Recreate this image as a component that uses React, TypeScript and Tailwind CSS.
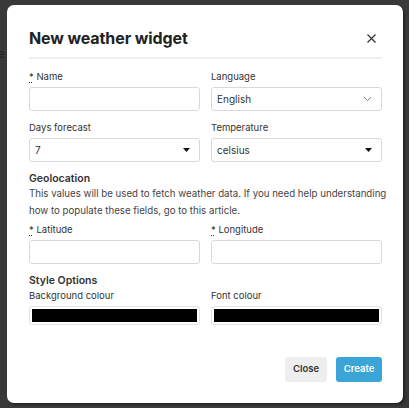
import React from "react";

const font = { fontFamily: "Inter, 'Noto Sans', sans-serif" };

function Req() {
  return (
    <abbr title="required" className="no-underline">
      <span className="underline decoration-dotted underline-offset-2">*</span>
    </abbr>
  );
}

function Label({ children }: { children: React.ReactNode }) {
  return (
    <div className="h-[14px] text-[9.5px] leading-[14px] text-[#333]">{children}</div>
  );
}

function TextInput() {
  return (
    <div className="mt-[3px] h-[24px] rounded-[3px] border border-[#d9d9d9] bg-white" />
  );
}

function Chevron() {
  return (
    <svg width="9" height="6" viewBox="0 0 9 6" className="shrink-0">
      <path d="M1 1.2 L4.5 4.6 L8 1.2" fill="none" stroke="#777" strokeWidth="1" />
    </svg>
  );
}

function Caret() {
  return (
    <svg width="7" height="4" viewBox="0 0 7 4" className="shrink-0">
      <path d="M0 0 H7 L3.5 4 Z" fill="#111" />
    </svg>
  );
}

function SelectBox({ value, icon }: { value: string; icon: React.ReactNode }) {
  return (
    <div className="mt-[3px] flex h-[24px] items-center justify-between rounded-[3px] border border-[#d9d9d9] bg-white pl-[5px] pr-[9px]">
      <span className="text-[10px] leading-none text-[#333]">{value}</span>
      {icon}
    </div>
  );
}

function ColorInput() {
  return (
    <div className="mt-[3px] h-[19px] rounded-[3px] border border-[#e2e2e2] bg-white p-[2px]">
      <div className="h-full w-full bg-black" />
    </div>
  );
}

export default function App() {
  return (
    <div
      className="relative h-[408px] w-[409px] overflow-hidden bg-[#393939]"
      style={font}
    >
      <span className="absolute left-[-6px] top-[47px] text-[11px] leading-[14px] text-[#1c1c1c]">
        re
      </span>
      <div className="flex h-full w-full pl-[7px] pt-[5px]">
        <div className="relative flex h-[398px] w-[396px] flex-col rounded-[7px] bg-white pl-[22px] pr-[21px] pt-[21px] shadow-[2px_2px_2px_rgba(0,0,0,0.35)]">
          {/* header */}
          <div className="flex h-[24px] items-center justify-between">
            <h2 className="text-[16px] font-bold leading-[24px] tracking-[-0.1px] text-[#222]">
              New weather widget
            </h2>
            <svg width="9" height="9" viewBox="0 0 9 9" className="mr-[6px]">
              <path d="M0.5 0.5 L8.5 8.5 M8.5 0.5 L0.5 8.5" stroke="#333" strokeWidth="1.2" />
            </svg>
          </div>
          <div className="mt-[7px] h-[2px] bg-[#f0f0f0]" />

          {/* row 1 */}
          <div className="mt-[11px] grid grid-cols-2 gap-x-[11px]">
            <div>
              <Label>
                <Req /> Name
              </Label>
              <TextInput />
            </div>
            <div>
              <Label>Language</Label>
              <SelectBox value="English" icon={<Chevron />} />
            </div>
          </div>

          {/* row 2 */}
          <div className="mt-[10px] grid grid-cols-2 gap-x-[11px]">
            <div>
              <Label>Days forecast</Label>
              <SelectBox value="7" icon={<Caret />} />
            </div>
            <div>
              <Label>Temperature</Label>
              <SelectBox value="celsius" icon={<Caret />} />
            </div>
          </div>

          {/* geolocation */}
          <div className="mt-[10px] h-[13px] text-[10.5px] font-semibold leading-[13px] text-[#333]">
            Geolocation
          </div>
          <p className="whitespace-nowrap text-[9.7px] leading-[17px] text-[#444]">
            This values will be used to fetch weather data. If you need help understanding
            <br />
            how to populate these fields, go to this article.
          </p>

          <div className="mt-[4px] grid grid-cols-2 gap-x-[11px]">
            <div>
              <Label>
                <Req /> Latitude
              </Label>
              <TextInput />
            </div>
            <div>
              <Label>
                <Req /> Longitude
              </Label>
              <TextInput />
            </div>
          </div>

          {/* style options */}
          <div className="mt-[10px] h-[13px] text-[10.5px] font-semibold leading-[13px] text-[#333]">
            Style Options
          </div>
          <div className="mt-[2px] grid grid-cols-2 gap-x-[11px]">
            <div>
              <Label>Background colour</Label>
              <ColorInput />
            </div>
            <div>
              <Label>Font colour</Label>
              <ColorInput />
            </div>
          </div>

          {/* footer */}
          <div className="mt-[32px] flex justify-end gap-[9px]">
            <button className="h-[25px] w-[42px] rounded-[3px] bg-[#eeeeee] text-[9.5px] font-semibold text-[#333]">
              Close
            </button>
            <button className="h-[25px] w-[46px] rounded-[3px] bg-[#3aa5d6] text-[9.5px] font-semibold text-white">
              Create
            </button>
          </div>
        </div>
      </div>
    </div>
  );
}
